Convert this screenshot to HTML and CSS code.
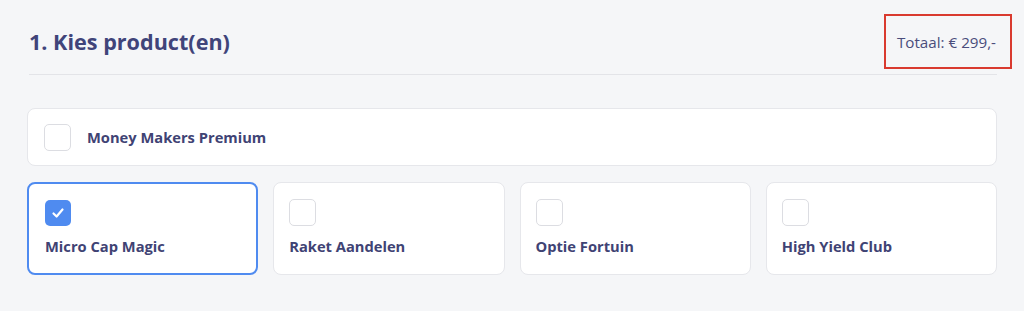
FILE: index.html
```html
<!DOCTYPE html>
<html lang="nl">
<head>
  <meta charset="UTF-8">
  <title>Kies product(en)</title>
  <link rel="stylesheet" href="styles.css">
</head>
<body>
  <div class="panel">
    <div class="header">
      <h1>1. Kies product(en)</h1>
      <span class="total">Totaal: € 299,-</span>
    </div>

    <div class="products">
      <label class="card wide">
        <span class="check"></span>
        <span class="name">Money Makers Premium</span>
      </label>

      <div class="grid">
        <label class="card small selected">
          <span class="check">
            <svg width="14" height="14" viewBox="0 0 14 14"><path d="M2.5 7.5 L5.6 10.5 L11.5 3.5" fill="none" stroke="#fff" stroke-width="2.2" stroke-linecap="round" stroke-linejoin="round"/></svg>
          </span>
          <span class="name">Micro Cap Magic</span>
        </label>
        <label class="card small">
          <span class="check"></span>
          <span class="name">Raket Aandelen</span>
        </label>
        <label class="card small">
          <span class="check"></span>
          <span class="name">Optie Fortuin</span>
        </label>
        <label class="card small">
          <span class="check"></span>
          <span class="name">High Yield Club</span>
        </label>
      </div>
    </div>
  </div>
</body>
</html>
```

FILE: styles.css
```css
* {
  box-sizing: border-box;
}

body {
  margin: 0;
  background: #ffffff;
  font-family: 'Open Sans', sans-serif;
  color: #3f4374;
}

.panel {
  background: #f5f6f8;
  height: 311px;
  padding: 0 27px;
}

.header {
  display: flex;
  justify-content: space-between;
  align-items: center;
  padding: 14px 0 5px;
  margin-left: 2px;
  border-bottom: 1px solid #e3e4e8;
}

h1 {
  margin: 0;
  font-size: 21.6px;
  font-weight: 700;
  color: #40447a;
}

.total {
  display: flex;
  align-items: center;
  height: 55px;
  padding: 0 14px 0 11px;
  margin-right: -15px;
  border: 2px solid #d93a2f;
  font-size: 15.2px;
  color: #4a4d7c;
}

.products {
  margin-top: 33px;
  display: flex;
  flex-direction: column;
  gap: 16px;
}

.card {
  background: #ffffff;
  border: 1px solid #e6e7eb;
  border-radius: 8px;
}

.card.wide {
  display: flex;
  align-items: center;
  gap: 16px;
  height: 58px;
  padding: 0 16px;
}

.grid {
  display: grid;
  grid-template-columns: repeat(4, 1fr);
  gap: 15px;
}

.card.small {
  display: flex;
  flex-direction: column;
  align-items: flex-start;
  gap: 10px;
  height: 93px;
  padding: 16px 15px;
}

.card.selected {
  border: 2px solid #4f8bf0;
  padding: 16px 16px 16px 16px;
}

.check {
  display: flex;
  justify-content: center;
  align-items: center;
  width: 27px;
  height: 27px;
  flex-shrink: 0;
  border: 1.5px solid #dcdde2;
  border-radius: 5px;
  background: #ffffff;
}

.selected .check {
  width: 26px;
  height: 26px;
  border: none;
  background: #4f8bf0;
}

.name {
  font-size: 14.7px;
  font-weight: 700;
  color: #3f4374;
}
```
